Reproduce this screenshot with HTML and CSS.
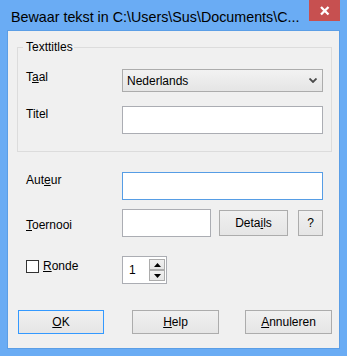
FILE: index.html
```html
<!DOCTYPE html>
<html lang="nl">
<head>
<meta charset="utf-8">
<title>Bewaar tekst</title>
<link rel="stylesheet" href="styles.css">
</head>
<body>
<div class="window">
  <div class="titlebar">
    <div class="title">Bewaar tekst in C:\Users\Sus\Documents\C...</div>
    <div class="close">
      <svg width="31" height="21" viewBox="0 0 31 21"><path d="M12 7 L19.5 14.5 M19.5 7 L12 14.5" stroke="#fff" stroke-width="2.3" fill="none"/></svg>
    </div>
  </div>
  <div class="client">
    <fieldset class="group">
      <legend class="legend">Texttitles</legend>
      <div class="row">
        <label class="lbl">T<u>a</u>al</label>
        <div class="combo"><span>Nederlands</span><svg class="chev" width="8" height="5" viewBox="0 0 8 5"><path d="M0.5 0.5 L4 4 L7.5 0.5" stroke="#4a4a4a" stroke-width="1.8" fill="none"/></svg></div>
      </div>
      <div class="row row-titel">
        <label class="lbl">Titel</label>
        <input class="field" type="text">
      </div>
    </fieldset>
    <div class="row row-out row-auteur">
      <label class="lbl">Aut<u>e</u>ur</label>
      <input class="field focus" type="text">
    </div>
    <div class="row row-out row-toernooi">
      <label class="lbl lbl-low"><u>T</u>oernooi</label>
      <div class="ctrls">
        <input class="field short" type="text">
        <button class="btn details" type="button">Deta<u>i</u>ls</button>
        <button class="btn qmark" type="button">?</button>
      </div>
    </div>
    <div class="row row-out row-ronde">
      <label class="check"><span class="box"></span><span><u>R</u>onde</span></label>
      <div class="spin">
        <span class="val">1</span>
        <div class="arrows">
          <span class="arrow"><svg width="7" height="4" viewBox="0 0 7 4"><path d="M0 4 L3.5 0 L7 4 Z" fill="#000"/></svg></span>
          <span class="arrow"><svg width="7" height="4" viewBox="0 0 7 4"><path d="M0 0 L3.5 4 L7 0 Z" fill="#000"/></svg></span>
        </div>
      </div>
    </div>
    <div class="buttons">
      <button class="btn main default" type="button"><u>O</u>K</button>
      <button class="btn main help" type="button"><u>H</u>elp</button>
      <button class="btn main cancel" type="button"><u>A</u>nnuleren</button>
    </div>
  </div>
</div>
</body>
</html>
```

FILE: styles.css
```css
* { box-sizing: border-box; }
html, body { margin: 0; padding: 0; }
body {
  font-family: "Liberation Sans", Arial, sans-serif;
  font-size: 12px;
  color: #000;
  background: #fff;
}
.window {
  width: 347px;
  height: 356px;
  background: #6aacf4;
  padding: 0 7px 7px 7px;
  display: flex;
  flex-direction: column;
}
.titlebar {
  height: 30px;
  display: flex;
  justify-content: space-between;
  align-items: flex-start;
}
.title {
  font-size: 14.3px;
  line-height: 20px;
  padding: 7px 0 0 4px;
  color: #000;
  white-space: nowrap;
}
.close {
  width: 31px;
  height: 21px;
  background: #c75050;
  display: flex;
}
.client {
  flex: 1;
  background: #f0f0f0;
  border: 1px solid #5b9ee6;
  display: flex;
  flex-direction: column;
}
.group {
  margin: 8px 7px 0 9px;
  padding: 0 8px 17px 8px;
  border: 1px solid #dcdcdc;
  min-width: 0;
}
.legend {
  padding: 0 1px 0 3px;
  margin-left: -3px;
  line-height: 16px;
}
.row {
  display: grid;
  grid-template-columns: 96px 201px;
  align-items: start;
  margin-top: 14px;
}
.row-out { padding: 0 16px 0 18px; }
.row-auteur { margin-top: 20px; }
.row-toernooi { margin-top: 9px; }
.row-ronde { margin-top: 19px; }
.lbl { line-height: 16px; }
.lbl-low { padding-top: 8px; }
.combo {
  height: 23px;
  border: 1px solid #acacac;
  background: linear-gradient(#f2f2f2, #e5e5e5);
  display: flex;
  align-items: center;
  justify-content: space-between;
  padding: 0 5px 0 4px;
  line-height: 16px;
}
.field {
  height: 28px;
  border: 1px solid #abadb3;
  background: #fff;
  margin: 0;
  padding: 0 4px;
  outline: none;
  font: inherit;
}
.field.focus { border-color: #569de5; }
.ctrls {
  display: flex;
  align-items: center;
}
.field.short { width: 89px; }
.btn {
  font: inherit;
  color: #000;
  border: 1px solid #acacac;
  background: linear-gradient(#f0f0f0, #e5e5e5);
  padding: 0;
  margin: 0;
  line-height: 16px;
}
.details { width: 69px; height: 26px; margin-left: 8px; }
.qmark { width: 25px; height: 26px; margin-left: 10px; }
.check {
  display: flex;
  align-items: flex-start;
  line-height: 16px;
  padding-top: 2px;
}
.box {
  width: 13px;
  height: 13px;
  border: 1px solid #333;
  background: #fff;
  margin: 2px 4px 0 0;
}
.spin {
  width: 45px;
  height: 28px;
  border: 1px solid #abadb3;
  background: #fff;
  display: flex;
  align-items: center;
  justify-content: space-between;
  padding: 0 1px 0 6px;
}
.val { line-height: 16px; }
.arrows {
  display: flex;
  flex-direction: column;
}
.arrow {
  width: 16px;
  height: 11px;
  border: 1px solid #acacac;
  background: linear-gradient(#f0f0f0, #e5e5e5);
  display: flex;
  align-items: center;
  justify-content: center;
}
.buttons {
  display: flex;
  margin-top: 26px;
  padding-left: 10px;
}
.main { height: 24px; width: 87px; }
.default { width: 86px; border-color: #3399ff; }
.help { margin-left: 28px; }
.cancel { margin-left: 26px; }
```
